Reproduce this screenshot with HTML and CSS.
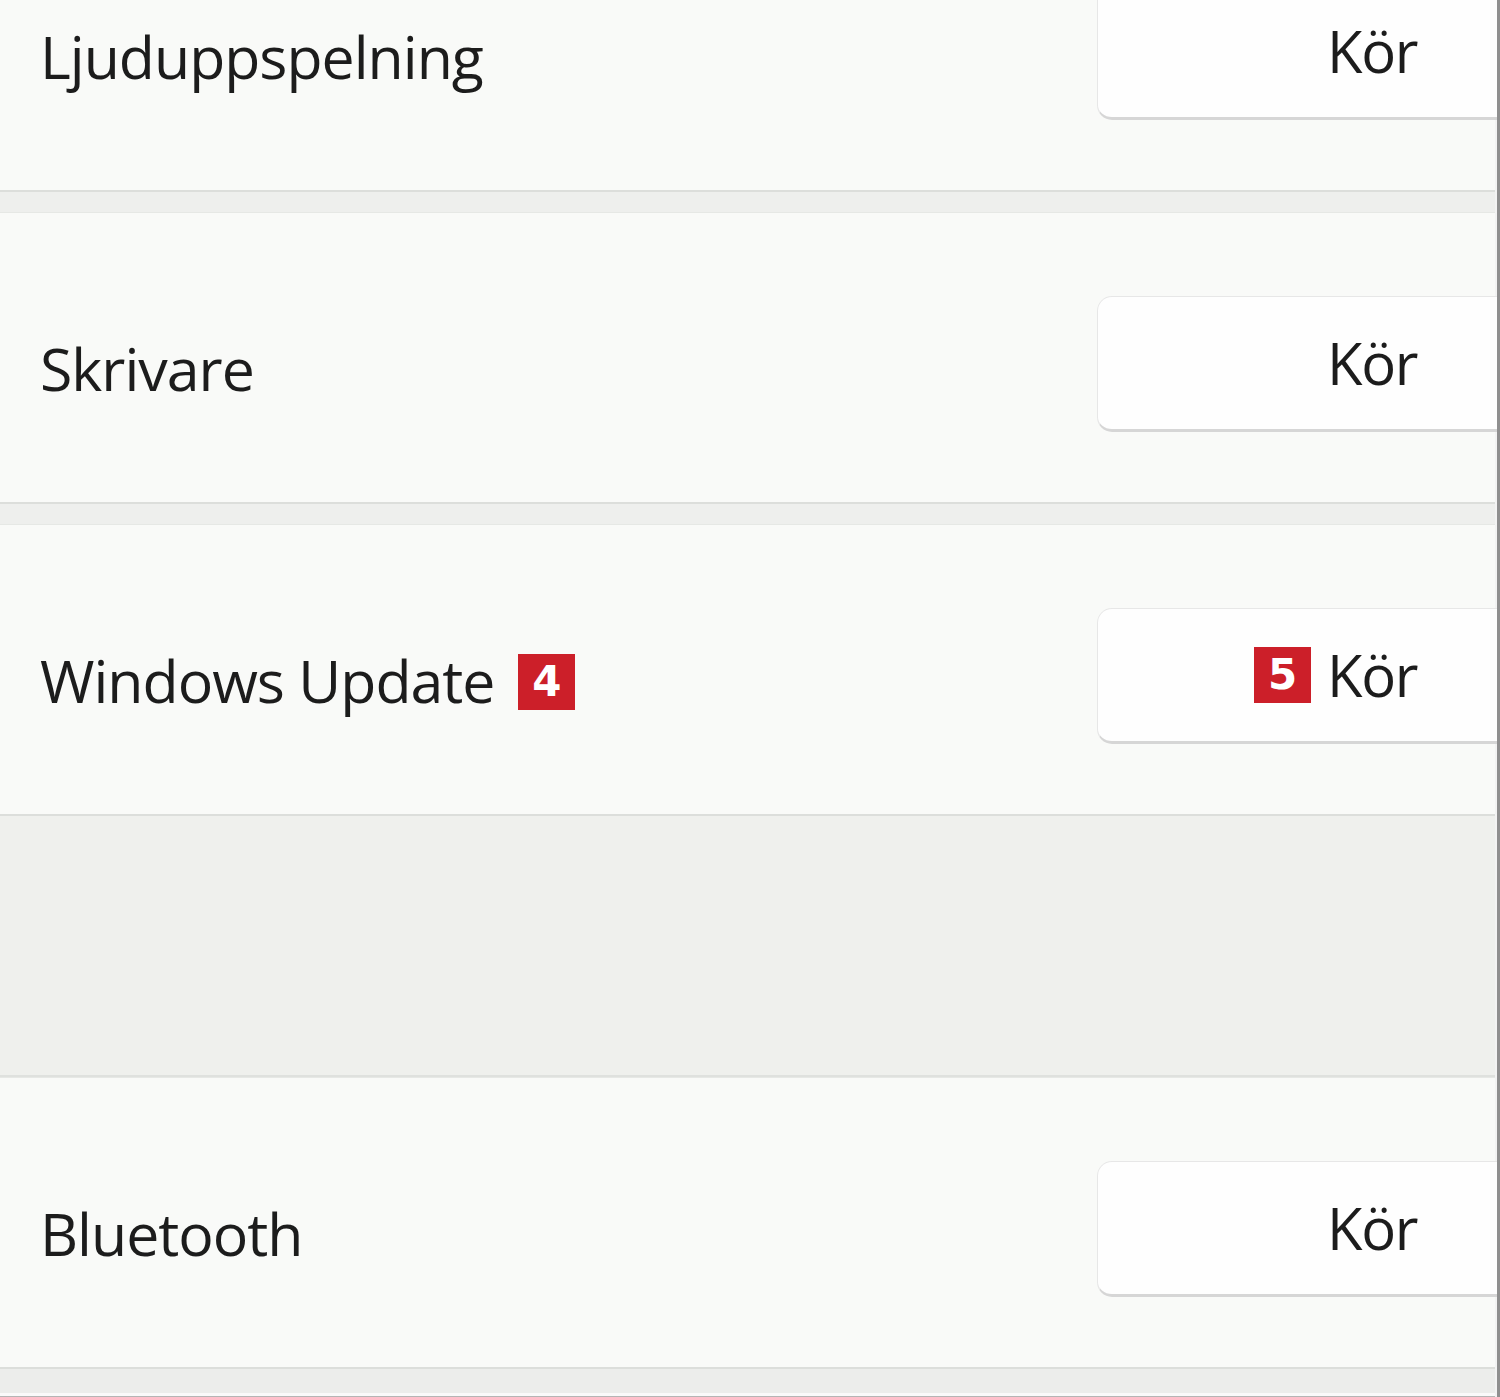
FILE: index.html
```html
<!DOCTYPE html>
<html lang="sv">
<head>
<meta charset="utf-8">
<title>Felsökare</title>
<link rel="stylesheet" href="styles.css">
</head>
<body>
<div class="frame">
  <div class="list">
    <div class="card">
      <div class="label">Ljuduppspelning</div>
      <button class="run"><span class="run-text">Kör</span></button>
    </div>
    <div class="card">
      <div class="label">Skrivare</div>
      <button class="run"><span class="run-text">Kör</span></button>
    </div>
    <div class="card">
      <div class="label">Windows Update <span class="badge badge-label">4</span></div>
      <button class="run"><span class="badge badge-btn">5</span><span class="run-text">Kör</span></button>
    </div>
    <div class="spacer"></div>
    <div class="card">
      <div class="label">Bluetooth</div>
      <button class="run"><span class="run-text">Kör</span></button>
    </div>
    <div class="bottom"></div>
  </div>
</div>
</body>
</html>
```
FILE: styles.css
```css
html, body {
  margin: 0;
  padding: 0;
  width: 1500px;
  height: 1397px;
  overflow: hidden;
  background: #eeefed;
}

.frame {
  width: 1497px;
  height: 1397px;
  overflow: hidden;
  border-right: 3px solid #8f8f8f;
  font-family: "Open Sans", "Noto Sans", sans-serif;
  color: #1c1c1c;
}

.list {
  display: flex;
  flex-direction: column;
  gap: 20px;
  margin-top: -100px;
  border-right: 2px solid #f3f3f3;
}

.card {
  height: 292px;
  box-sizing: border-box;
  background: #f9faf8;
  border-top: 1px solid #e6e8e5;
  border-bottom: 2px solid #dcdedb;
  display: flex;
  align-items: flex-start;
  justify-content: space-between;
  padding-left: 40px;
}

.label {
  margin-top: 113px;
  font-size: 59px;
  line-height: 84px;
  letter-spacing: -1px;
  display: flex;
  align-items: center;
  gap: 24px;
}

.run {
  margin-top: 83px;
  width: 420px;
  height: 136px;
  margin-right: -22px;
  box-sizing: border-box;
  background: #fefefe;
  border: 1px solid #e7e7e7;
  border-bottom: 3px solid #d6d6d6;
  border-radius: 15px;
  display: flex;
  align-items: center;
  justify-content: flex-end;
  gap: 16px;
  padding: 0 99px 0 0;
  font-family: "Open Sans", "Noto Sans", sans-serif;
  color: #1c1c1c;
  font-size: 58px;
  letter-spacing: -1.4px;
}

.run-text {
  line-height: 84px;
}

.badge {
  display: inline-flex;
  align-items: center;
  justify-content: center;
  width: 57px;
  height: 56px;
  background: #cc1f29;
  color: #ffffff;
  font-family: "DejaVu Sans", "Liberation Sans", sans-serif;
  font-weight: bold;
  font-size: 42px;
  line-height: 56px;
  letter-spacing: 0;
}

.badge-label {
  margin-top: 4px;
}

.spacer {
  height: 261px;
  margin: -20px 0;
  background: #eff0ed;
  box-sizing: border-box;
  border-bottom: 2px solid #dfe1de;
}

.bottom {
  margin-top: -20px;
  height: 24px;
  background: #ecedeb;
  border-bottom: 3px solid #fafafa;
  box-shadow: 0 4px 0 #b5b5b5;
}
```
